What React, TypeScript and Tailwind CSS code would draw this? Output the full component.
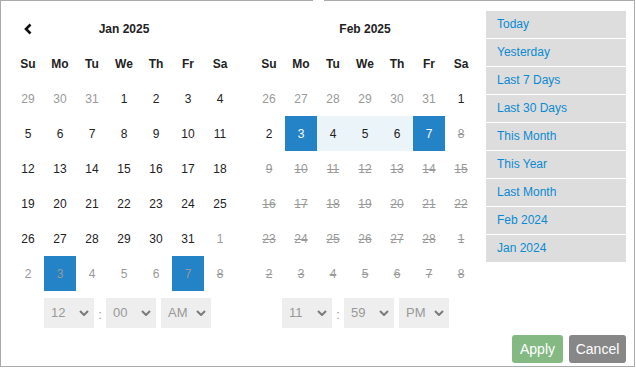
import React from 'react';

type Day = { n: number; off?: boolean; dis?: boolean; sel?: boolean; range?: boolean };

const WEEK = ['Su', 'Mo', 'Tu', 'We', 'Th', 'Fr', 'Sa'];

const RANGES = ['Today', 'Yesterday', 'Last 7 Days', 'Last 30 Days', 'This Month', 'This Year', 'Last Month', 'Feb 2024', 'Jan 2024'];

// January 2025, grid starts Sun Dec 29
const janDays: Day[] = [
  ...[29, 30, 31].map((n) => ({ n, off: true })),
  ...Array.from({ length: 31 }, (_, i) => ({ n: i + 1 })),
  { n: 1, off: true },
  { n: 2, off: true },
  { n: 3, off: true, sel: true },
  { n: 4, off: true },
  { n: 5, off: true },
  { n: 6, off: true },
  { n: 7, off: true, sel: true },
  { n: 8, off: true, dis: true },
];

// February 2025, grid starts Sun Jan 26
const febDays: Day[] = [
  ...[26, 27, 28, 29, 30, 31].map((n) => ({ n, off: true })),
  { n: 1 },
  { n: 2 },
  { n: 3, sel: true },
  { n: 4, range: true },
  { n: 5, range: true },
  { n: 6, range: true },
  { n: 7, sel: true },
  ...Array.from({ length: 21 }, (_, i) => ({ n: i + 8, dis: true })),
  { n: 1, off: true, dis: true },
  ...[2, 3, 4, 5, 6, 7, 8].map((n) => ({ n, off: true, dis: true })),
];

const Chevron = () => (
  <svg width="10" height="6" viewBox="0 0 10 6" fill="none">
    <path d="M1 1l4 4 4-4" stroke="#7a7a7a" strokeWidth="2" />
  </svg>
);

const FakeSelect = ({ value }: { value: string }) => (
  <div className="flex h-[30px] w-[50px] items-center justify-between bg-[#eeeeee] pl-[7px] pr-[5px] text-[13px] text-[#999]">
    <span>{value}</span>
    <Chevron />
  </div>
);

const TimeRow = ({ h, m, ap, pad }: { h: string; m: string; ap: string; pad: string }) => (
  <div className={`mt-[7px] flex items-center ${pad}`}>
    <FakeSelect value={h} />
    <span className="w-[12px] pt-[3px] text-center text-[13px] leading-none text-[#999]">:</span>
    <FakeSelect value={m} />
    <div className="ml-[5px]">
      <FakeSelect value={ap} />
    </div>
  </div>
);

const DayCell = ({ d }: { d: Day }) => {
  let cls = 'text-[#222]';
  if (d.off || d.dis) cls = 'text-[#999]';
  if (d.dis) cls += ' line-through';
  if (d.sel) cls = `bg-[#2383c6] ${d.off ? 'text-[#999]' : 'text-white'}${d.dis ? ' line-through' : ''}`;
  if (d.range) cls = 'bg-[#ebf4f8] text-[#222]';
  return <div className={`flex h-[35px] w-[32px] items-center justify-center text-[12px] ${cls}`}>{d.n}</div>;
};

const Calendar = ({ title, days, prev }: { title: string; days: Day[]; prev?: boolean }) => (
  <div className="w-[224px]">
    <div className="grid grid-cols-7">
      <div className="flex h-[35px] items-center justify-center">
        {prev && (
          <svg width="10" height="12" viewBox="0 0 10 12" fill="none">
            <path d="M7.5 1.5L3 6l4.5 4.5" stroke="#111" strokeWidth="2.6" />
          </svg>
        )}
      </div>
      <div className="col-span-5 flex h-[35px] items-center justify-center text-[12px] font-bold text-[#222]">{title}</div>
      <div />
      {WEEK.map((w) => (
        <div key={w} className="flex h-[35px] items-center justify-center text-[12px] font-bold text-[#222]">
          {w}
        </div>
      ))}
      {days.map((d, i) => (
        <DayCell key={i} d={d} />
      ))}
    </div>
  </div>
);

export default function App() {
  return (
    <div className="bg-white" style={{ fontFamily: '"Liberation Sans", Arial, sans-serif' }}>
      <div className="relative flex h-[367px] w-[635px] flex-col border border-[#aaa] bg-white">
        <div className="absolute -top-px left-[312px] h-[2px] w-[11px] bg-white" />
        <div className="flex pl-[11px] pt-[10px]">
          <div>
            <Calendar title="Jan 2025" days={janDays} prev />
            <TimeRow h="12" m="00" ap="AM" pad="pl-[32px]" />
          </div>
          <div className="ml-[17px]">
            <Calendar title="Feb 2025" days={febDays} />
            <TimeRow h="11" m="59" ap="PM" pad="pl-[29px]" />
          </div>
          <ul className="ml-[9px] flex w-[140px] flex-col gap-px">
            {RANGES.map((r) => (
              <li key={r} className="flex h-[27px] items-center bg-[#dddddd] pb-[2px] pl-[11px] text-[12px] text-[#0a8ad2]">
                {r}
              </li>
            ))}
          </ul>
        </div>
        <div className="mt-[7px] flex justify-end gap-[6px] pr-[8px]">
          <button className="h-[28px] w-[51px] rounded-[3px] bg-[#84b984] text-[14px] text-white">Apply</button>
          <button className="h-[28px] w-[57px] rounded-[3px] bg-[#878787] text-[14px] text-white">Cancel</button>
        </div>
      </div>
    </div>
  );
}
